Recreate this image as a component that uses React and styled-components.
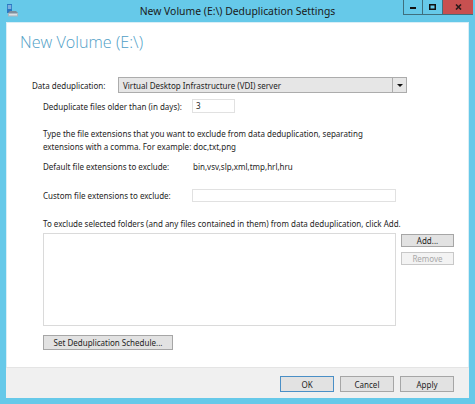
import React from "react";
import styled, { createGlobalStyle } from "styled-components";

const GlobalStyle = createGlobalStyle`
  html, body {
    margin: 0;
    padding: 0;
    background: #ffffff;
  }
  body {
    font-family: "Noto Sans", "Open Sans", sans-serif;
  }
`;

const Window = styled.div`
  width: 475px;
  height: 404px;
  box-sizing: border-box;
  background: #66c9e9;
  display: flex;
  flex-direction: column;
  padding: 0 6px 6px 6px;
  overflow: hidden;
`;

const TitleBar = styled.div`
  height: 22px;
  flex: none;
  display: flex;
  align-items: flex-start;
  position: relative;
`;

const AppIcon = styled.svg`
  width: 12px;
  height: 13px;
  margin-top: 4px;
  flex: none;
`;

const Title = styled.div`
  position: absolute;
  left: 0;
  right: 0;
  top: 4px;
  text-align: center;
  font-size: 10.4px;
  line-height: 14px;
  color: #1a1a1a;
  pointer-events: none;
`;

const CaptionButtons = styled.div`
  margin-left: auto;
  margin-right: -4px;
  display: flex;
  height: 15px;
`;

const CaptionButton = styled.div`
  width: ${(p) => (p.$close ? "30px" : "20px")};
  height: 15px;
  box-sizing: border-box;
  background: ${(p) => (p.$close ? "#c75050" : "#66c9e9")};
  border: 1px solid #3f6f7e;
  border-top: none;
  border-left: ${(p) => (p.$first ? "1px solid #3f6f7e" : "none")};
  border-right: ${(p) => (p.$close ? "none" : "1px solid #3f6f7e")};
  display: flex;
  align-items: center;
  justify-content: center;
`;

const Client = styled.div`
  flex: 1;
  display: flex;
  flex-direction: column;
  background: #ffffff;
  box-shadow: inset 0 0 0 1px #d9eef6;
`;

const Content = styled.div`
  flex: 1;
  padding: 10px 0 0 14px;
  display: flex;
  flex-direction: column;
  font-size: 8px;
  color: #1e1e1e;
`;

const Heading = styled.h1`
  margin: 0;
  font-family: "Open Sans", "Noto Sans", sans-serif;
  font-weight: 300;
  font-size: 16.2px;
  line-height: 20px;
  color: #4f9ec6;
`;

const Form = styled.div`
  display: flex;
  flex-direction: column;
  padding-left: 12px;
`;

const Indented = styled.div`
  display: flex;
  flex-direction: column;
  padding-left: 11px;
`;

const Row = styled.div`
  display: flex;
  align-items: center;
  height: ${(p) => p.$h || 13}px;
  margin-top: ${(p) => p.$mt || 0}px;
  white-space: nowrap;
`;

const Label = styled.span`
  width: ${(p) => p.$w}px;
  flex: none;
  line-height: 13px;
`;

const Select = styled.div`
  width: 289px;
  height: 16px;
  box-sizing: border-box;
  border: 1px solid #acacac;
  background: #e6e6e6;
  display: flex;
  align-items: center;
`;

const SelectText = styled.span`
  flex: 1;
  padding-left: 4px;
`;

const SelectArrow = styled.div`
  width: 13px;
  height: 100%;
  border-left: 1px solid #acacac;
  display: flex;
  align-items: center;
  justify-content: center;
  &::after {
    content: "";
    border-left: 3px solid transparent;
    border-right: 3px solid transparent;
    border-top: 3px solid #111;
  }
`;

const TextInput = styled.div`
  width: ${(p) => p.$w}px;
  height: ${(p) => p.$h}px;
  box-sizing: border-box;
  border: 1px solid #e1e1e1;
  background: #fff;
  padding-left: 3px;
  line-height: ${(p) => p.$h - 2}px;
`;

const Para = styled.p`
  margin: ${(p) => p.$mt || 0}px 0 0 0;
  line-height: 13px;
  white-space: nowrap;
`;

const ListRow = styled.div`
  display: flex;
  align-items: flex-start;
  margin-top: 3px;
`;

const ListBox = styled.div`
  width: 353px;
  height: 93px;
  box-sizing: border-box;
  border: 1px solid #dadada;
  background: #fff;
`;

const SideButtons = styled.div`
  display: flex;
  flex-direction: column;
  gap: 5px;
  margin-left: 5px;
  margin-top: 1px;
`;

const Button = styled.div`
  width: ${(p) => p.$w}px;
  height: ${(p) => p.$h || 14}px;
  box-sizing: border-box;
  border: 1px solid ${(p) => (p.$default ? "#4a8fc6" : p.$disabled ? "#c8c8c8" : "#a6a6a6")};
  background: ${(p) => (p.$disabled ? "#f3f3f3" : "#e2e2e2")};
  color: ${(p) => (p.$disabled ? "#a8a8a8" : "#1e1e1e")};
  display: flex;
  align-items: center;
  justify-content: center;
  white-space: nowrap;
  flex: none;
`;

const Footer = styled.div`
  height: 31px;
  flex: none;
  box-sizing: border-box;
  background: #f0f0f0;
  border-top: 1px solid #e4e4e4;
  display: flex;
  justify-content: flex-end;
  align-items: flex-start;
  gap: 6px;
  padding: 8px 15px 0 0;
  font-size: 8px;
`;

const TitleIcon = () => (
  <AppIcon viewBox="0 0 12 13">
    <rect x="1" y="0" width="5" height="9" fill="#2a78c4" />
    <rect x="1.8" y="1.5" width="3.4" height="1" fill="#cfe6f7" />
    <rect x="1.8" y="3.5" width="3.4" height="1" fill="#cfe6f7" />
    <path d="M2 9 L4 7 L10 7 L12 9 Z" fill="#7d8e9c" />
    <rect x="2" y="9" width="10" height="3.5" fill="#a9b6c0" />
    <rect x="3" y="10.3" width="8" height="1" fill="#eef2f5" />
  </AppIcon>
);

export default function App() {
  return (
    <>
      <GlobalStyle />
      <Window>
        <TitleBar>
          <TitleIcon />
          <Title>New Volume (E:\) Deduplication Settings</Title>
          <CaptionButtons>
            <CaptionButton $first>
              <svg width="6" height="6" viewBox="0 0 6 6">
                <rect x="0" y="3" width="6" height="2" fill="#111" />
              </svg>
            </CaptionButton>
            <CaptionButton>
              <svg width="7" height="6" viewBox="0 0 7 6">
                <rect x="0.75" y="0.75" width="5.5" height="4.5" fill="none" stroke="#111" strokeWidth="1.5" />
              </svg>
            </CaptionButton>
            <CaptionButton $close>
              <svg width="7" height="6" viewBox="0 0 7 6">
                <path d="M1 0.5 L6 5.5 M6 0.5 L1 5.5" stroke="#2a1a1a" strokeWidth="1.6" />
              </svg>
            </CaptionButton>
          </CaptionButtons>
        </TitleBar>
        <Client>
          <Content>
            <Heading>New Volume (E:\)</Heading>
            <Form>
              <Row $h={16} $mt={25}>
                <Label $w={86}>Data deduplication:</Label>
                <Select>
                  <SelectText>Virtual Desktop Infrastructure (VDI) server</SelectText>
                  <SelectArrow />
                </Select>
              </Row>
              <Indented>
                <Row $h={14} $mt={6}>
                  <Label $w={149}>Deduplicate files older than (in days):</Label>
                  <TextInput $w={43} $h={14}>3</TextInput>
                </Row>
                <Para $mt={14}>
                  Type the file extensions that you want to exclude from data deduplication, separating
                  <br />
                  extensions with a comma. For example: doc,txt,png
                </Para>
                <Row $mt={7}>
                  <Label $w={150}>Default file extensions to exclude:</Label>
                  <span>bin,vsv,slp,xml,tmp,hrl,hru</span>
                </Row>
                <Row $mt={16}>
                  <Label $w={149}>Custom file extensions to exclude:</Label>
                  <TextInput $w={204} $h={13} />
                </Row>
                <Para $mt={15}>
                  To exclude selected folders (and any files contained in them) from data deduplication, click Add.
                </Para>
                <ListRow>
                  <ListBox />
                  <SideButtons>
                    <Button $w={53} $h={13}>Add...</Button>
                    <Button $w={53} $h={13} $disabled>Remove</Button>
                  </SideButtons>
                </ListRow>
                <Row $h={15} $mt={9}>
                  <Button $w={130} $h={15}>Set Deduplication Schedule...</Button>
                </Row>
              </Indented>
            </Form>
          </Content>
          <Footer>
            <Button $w={54} $h={16} $default>OK</Button>
            <Button $w={54} $h={16}>Cancel</Button>
            <Button $w={54} $h={16}>Apply</Button>
          </Footer>
        </Client>
      </Window>
    </>
  );
}
